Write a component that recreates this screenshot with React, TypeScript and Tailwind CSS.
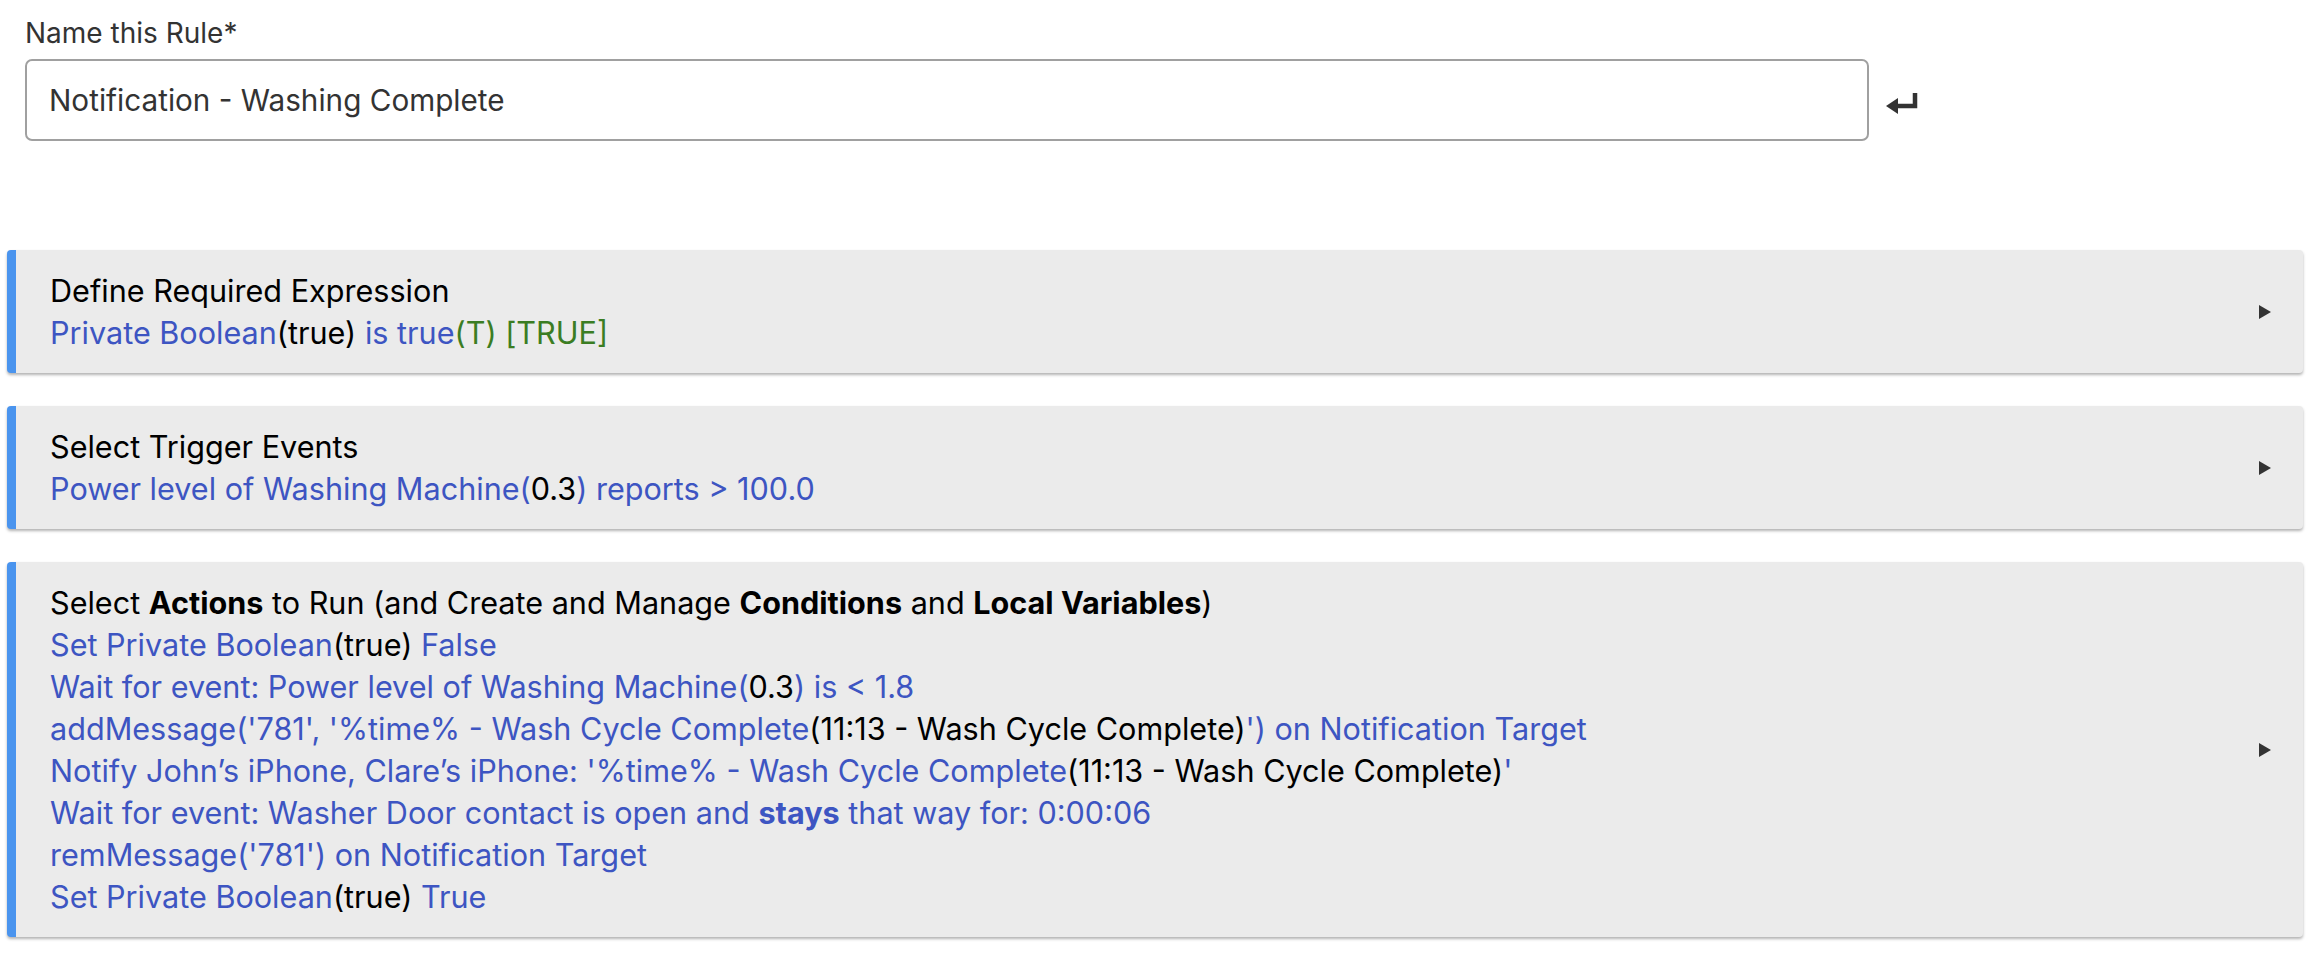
import React from 'react';

const B = ({ children }: { children: React.ReactNode }) => <span className="text-[#3d55c2]">{children}</span>;
const K = ({ children }: { children: React.ReactNode }) => <span className="text-black">{children}</span>;
const G = ({ children }: { children: React.ReactNode }) => <span className="text-[#3b7d23]">{children}</span>;

function Section({ title, lines }: { title: React.ReactNode; lines: React.ReactNode[] }) {
  return (
    <div className="ml-[7px] w-[2296px] flex items-center bg-[#ebebeb] rounded-[4px] border-l-[9px] border-[#4a94ee] shadow-[0_2px_3px_rgba(0,0,0,0.3)]">
      <div className="flex-1 pl-[34px] pt-[20px] pb-[19px] leading-[42px]">
        <div className="text-black">{title}</div>
        {lines.map((l, i) => (
          <div key={i}>{l}</div>
        ))}
      </div>
      <svg width="16" height="16" viewBox="0 0 16 16" className="mr-[30px]">
        <path d="M2 1 L14 8 L2 15 Z" fill="#333" />
      </svg>
    </div>
  );
}

export default function App() {
  return (
    <div className="min-h-screen bg-white text-[30.6px] font-['Inter',sans-serif]">
      <div className="pl-[25px] pt-[12px]">
        <div className="text-[#333] text-[28px] leading-[42px]">Name this Rule*</div>
        <div className="flex items-center mt-[5px]">
          <div className="w-[1844px] h-[82px] border-2 border-[#a0a0a0] rounded-[7px] flex items-center px-[22px] text-[#333] text-[29.7px]">
            Notification - Washing Complete
          </div>
          <svg width="36" height="28" viewBox="0 0 36 28" className="ml-[16px] mt-[10px]">
            <path d="M30 2 V15 H11" fill="none" stroke="#333" strokeWidth="4.5" />
            <path d="M1 15 L13 7 L13 23 Z" fill="#333" />
          </svg>
        </div>
      </div>
      <div className="mt-[109px] flex flex-col gap-[33px]">
        <Section
          title="Define Required Expression"
          lines={[
            <>
              <B>Private Boolean</B>
              <K>(true)</K> <B>is true</B>
              <G>(T) [TRUE]</G>
            </>,
          ]}
        />
        <Section
          title="Select Trigger Events"
          lines={[
            <>
              <B>Power level of Washing Machine(</B>
              <K>0.3</K>
              <B>) reports &gt; 100.0</B>
            </>,
          ]}
        />
        <Section
          title={
            <>
              Select <b>Actions</b> to Run (and Create and Manage <b>Conditions</b> and <b>Local Variables</b>)
            </>
          }
          lines={[
            <>
              <B>Set Private Boolean</B>
              <K>(true)</K> <B>False</B>
            </>,
            <>
              <B>Wait for event: Power level of Washing Machine(</B>
              <K>0.3</K>
              <B>) is &lt; 1.8</B>
            </>,
            <>
              <B>addMessage('781', '%time% - Wash Cycle Complete</B>
              <K>(11:13 - Wash Cycle Complete)</K>
              <B>') on Notification Target</B>
            </>,
            <>
              <B>Notify John’s iPhone, Clare’s iPhone: '%time% - Wash Cycle Complete</B>
              <K>(11:13 - Wash Cycle Complete)</K>
              <B>'</B>
            </>,
            <>
              <B>
                Wait for event: Washer Door contact is open and <b>stays</b> that way for: 0:00:06
              </B>
            </>,
            <>
              <B>remMessage('781') on Notification Target</B>
            </>,
            <>
              <B>Set Private Boolean</B>
              <K>(true)</K> <B>True</B>
            </>,
          ]}
        />
      </div>
    </div>
  );
}
